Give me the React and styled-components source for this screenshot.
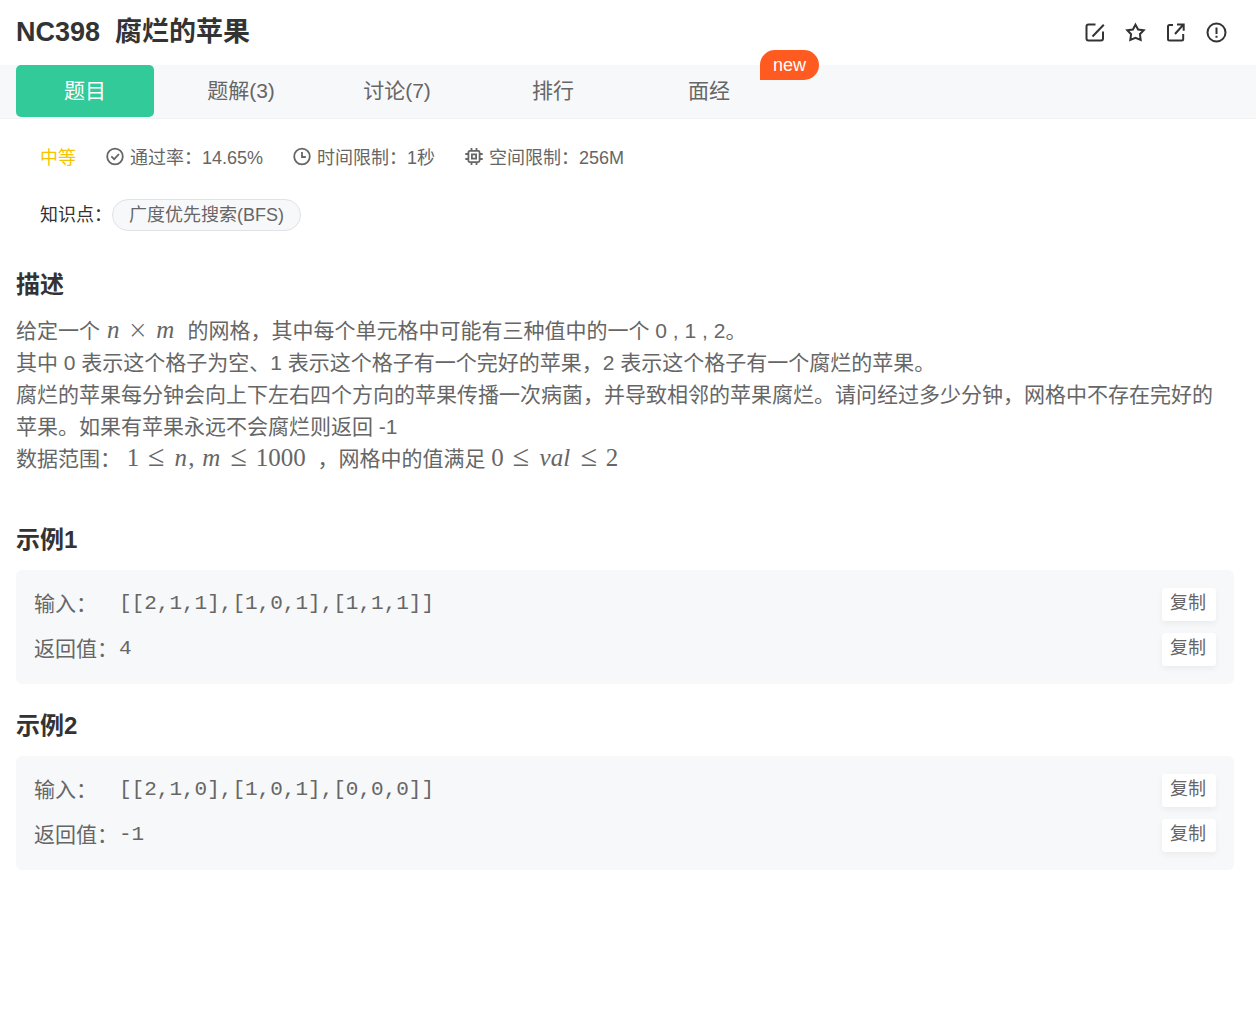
import React from "react";
import styled, { createGlobalStyle } from "styled-components";

const GlobalStyle = createGlobalStyle`
  * {
    box-sizing: border-box;
  }
  body {
    margin: 0;
    background: #fff;
    color: #666;
    font-family: "Liberation Sans", Arial, "Noto Sans CJK SC", sans-serif;
    font-size: 21px;
    line-height: 32px;
  }
  button {
    padding: 0;
    border: 0;
    background: none;
    color: inherit;
    font: inherit;
    cursor: pointer;
  }
`;

const Header = styled.header`
  display: flex;
  align-items: center;
  justify-content: space-between;
  height: 65px;
  padding: 0 28px 2px 16px;
`;

const Title = styled.h1`
  display: flex;
  gap: 15px;
  margin: 0;
  color: #333;
  font-size: 27px;
  line-height: 40px;
`;

const Actions = styled.div`
  display: flex;
  gap: 16px;
  color: #333;
`;

const IconButton = styled.button`
  display: grid;
  place-items: center;
  width: 24px;
  height: 24px;
`;

const Icon = styled.svg`
  display: block;
  flex: none;
  width: ${(p) => p.$size}px;
  height: ${(p) => p.$size}px;
  fill: none;
  stroke: currentColor;
  stroke-width: ${(p) => p.$weight};
`;

const TabBar = styled.nav`
  display: flex;
  gap: 18px;
  padding: 0 16px 1px;
  border-bottom: 1px solid #f1f2f4;
  background: #f7f8fa;
`;

const Tab = styled.button`
  position: relative;
  width: 138px;
  height: 52px;
  border-radius: 5px;
  background: ${(p) => (p.$active ? "#32ca99" : "transparent")};
  color: ${(p) => (p.$active ? "#fff" : "#666")};
`;

const Badge = styled.span`
  position: absolute;
  top: -15px;
  left: 120px;
  padding: 0 13px;
  border-radius: 15px 15px 15px 0;
  background: #ff5a1f;
  color: #fff;
  font-size: 18px;
  line-height: 30px;
`;

const Meta = styled.div`
  display: flex;
  gap: 30px;
  padding: 23px 40px 0;
  font-size: 18px;
`;

const Level = styled.span`
  color: #f5c400;
`;

const MetaItem = styled.span`
  display: flex;
  align-items: center;
  gap: 6px;
`;

const Topics = styled.div`
  display: flex;
  align-items: center;
  padding: 25px 40px 0;
  color: #333;
  font-size: 18px;
`;

const Tag = styled.a`
  padding: 0 16px;
  border: 1px solid #dfe2e6;
  border-radius: 16px;
  background: #f7f8fa;
  color: #666;
  line-height: 30px;
  text-decoration: none;
`;

const Section = styled.section`
  padding: ${(p) => p.$top}px 22px 0 16px;
`;

const Heading = styled.h2`
  margin: 0 0 12px;
  color: #333;
  font-size: 24px;
  line-height: 36px;
`;

const Prose = styled.p`
  margin: 0;
  padding-right: 16px;
`;

const MathText = styled.span`
  font-family: "Liberation Serif", "Times New Roman", serif;
  font-size: 25px;
  line-height: 1;
  white-space: nowrap;
`;

const Variable = styled.i`
  display: inline-block;
  width: ${(p) => p.$width}px;
  text-align: center;
`;

const Operator = styled.span`
  display: inline-block;
  width: 34px;
  line-height: 20px;
  text-align: center;
`;

const Times = styled(Operator)`
  font-family: "DejaVu Sans", sans-serif;
  font-weight: 200;
  font-size: 24px;
`;

const Relation = styled(Operator)`
  font-size: 30px;
`;

const Example = styled.div`
  display: grid;
  gap: 12px;
  padding: 18px;
  border-radius: 6px;
  background: #f7f8fa;
`;

const ExampleRow = styled.div`
  display: grid;
  grid-template-columns: 85px 1fr auto;
  align-items: start;
  line-height: 31px;
`;

const Code = styled.code`
  font-family: "Liberation Mono", "Courier New", monospace;
  font-size: 21px;
`;

const CopyButton = styled.button`
  width: 54px;
  height: 33px;
  padding: 0 2px 2px 0;
  border-radius: 3px;
  background: #fff;
  box-shadow: 0 3px 6px rgba(0, 0, 0, 0.05);
  font-size: 18px;
`;

const EditIcon = () => (
  <Icon viewBox="0 0 24 24" $size={24} $weight={2}>
    <path d="M11.500 4.500H4.500A2 2 0 0 0 2.500 6.500V18.500A2 2 0 0 0 4.500 20.500H17A2 2 0 0 0 19 18.500V11.500" />
    <path d="M8.500 16.500 19.800 4.800" />
  </Icon>
);

const StarIcon = () => (
  <Icon viewBox="0 0 24 24" $size={24} $weight={2}>
    <path d="M11.500 4.700 14.100 9.500 19.700 10.300 15.900 14.200 16.700 19.900 11.500 17.800 6.300 19.900 7.100 14.200 3.300 10.300 8.900 9.500Z" />
  </Icon>
);

const ShareIcon = () => (
  <Icon viewBox="0 0 24 24" $size={24} $weight={2}>
    <path d="M9 5H5.500A1.500 1.500 0 0 0 4 6.500V19A1.500 1.500 0 0 0 5.500 20.500H17.700A1.500 1.500 0 0 0 19.200 19V14" />
    <path d="M11 14 19 5M13 4.500H19.700V10.800" />
  </Icon>
);

const WarningIcon = () => (
  <Icon viewBox="0 0 24 24" $size={24} $weight={2}>
    <circle cx="12.500" cy="12.500" r="9" />
    <path d="M12.500 7.500V14M12.500 15.700V17.700" />
  </Icon>
);

const PassIcon = () => (
  <Icon viewBox="0 0 18 18" $size={18} $weight={1.8}>
    <circle cx="9" cy="7.500" r="7.800" />
    <path d="M5.300 7.300 8.200 10.100 13 5" />
  </Icon>
);

const ClockIcon = () => (
  <Icon viewBox="0 0 18 18" $size={18} $weight={1.8}>
    <circle cx="9" cy="7.500" r="7.800" />
    <path d="M9 3V8H12.800" />
  </Icon>
);

const ChipIcon = () => (
  <Icon viewBox="0 0 18 18" $size={18} $weight={1.8}>
    <rect x="3.400" y="1.900" width="11.200" height="11.200" rx="1.500" />
    <rect x="6.900" y="5.400" width="4.200" height="4.200" />
    <path d="M6.500 1.500V-1M11.500 1.500V-1M6.500 13.500V16M11.500 13.500V16M3 5H0.300M3 10H0.300M15 5H17.700M15 10H17.700" />
  </Icon>
);

const MetaGlyph = styled.span`
  display: flex;

  svg {
    overflow: visible;
  }
`;

const actions = [
  { label: "编辑", Glyph: EditIcon },
  { label: "收藏", Glyph: StarIcon },
  { label: "分享", Glyph: ShareIcon },
  { label: "反馈", Glyph: WarningIcon },
];

const tabs = [
  { label: "题目", active: true },
  { label: "题解(3)" },
  { label: "讨论(7)" },
  { label: "排行" },
  { label: "面经", badge: "new" },
];

const limits = [
  { text: "通过率：14.65%", Glyph: PassIcon },
  { text: "时间限制：1秒", Glyph: ClockIcon },
  { text: "空间限制：256M", Glyph: ChipIcon },
];

const examples = [
  { title: "示例1", input: "[[2,1,1],[1,0,1],[1,1,1]]", output: "4" },
  { title: "示例2", input: "[[2,1,0],[1,0,1],[0,0,0]]", output: "-1" },
];

const copy = (text) => navigator.clipboard?.writeText(text);

export default function App() {
  return (
    <>
      <GlobalStyle />
      <Header>
        <Title>
          <span>NC398</span>
          <span>腐烂的苹果</span>
        </Title>
        <Actions>
          {actions.map(({ label, Glyph }) => (
            <IconButton key={label} type="button" aria-label={label}>
              <Glyph />
            </IconButton>
          ))}
        </Actions>
      </Header>
      <TabBar>
        {tabs.map((tab) => (
          <Tab key={tab.label} type="button" $active={tab.active}>
            {tab.label}
            {tab.badge && <Badge>{tab.badge}</Badge>}
          </Tab>
        ))}
      </TabBar>
      <main>
        <Meta>
          <Level>中等</Level>
          {limits.map(({ text, Glyph }) => (
            <MetaItem key={text}>
              <MetaGlyph>
                <Glyph />
              </MetaGlyph>
              {text}
            </MetaItem>
          ))}
        </Meta>
        <Topics>
          <span>知识点：</span>
          <Tag href="#bfs">广度优先搜索(BFS)</Tag>
        </Topics>
        <Section $top={36}>
          <Heading>描述</Heading>
          <Prose>
            给定一个{" "}
            <MathText>
              <Variable $width={15}>n</Variable>
              <Times>×</Times>
              <Variable $width={21}>m</Variable>
            </MathText>
            {" \u00a0"}的网格，其中每个单元格中可能有三种值中的一个 0 , 1 , 2。
            <br />
            其中 0 表示这个格子为空、1 表示这个格子有一个完好的苹果，2
            表示这个格子有一个腐烂的苹果。
            <br />
            腐烂的苹果每分钟会向上下左右四个方向的苹果传播一次病菌，并导致相邻的苹果腐烂。请问经过多少分钟，网格中不存在完好的苹果。如果有苹果永远不会腐烂则返回
            -1
            <br />
            数据范围：{" "}
            <MathText>
              1<Relation>≤</Relation>
              <Variable $width={15}>n</Variable>,{" "}
              <Variable $width={21}>m</Variable>
              <Relation>≤</Relation>1000
            </MathText>
            {" \u00a0"}，网格中的值满足{" "}
            <MathText>
              0<Relation>≤</Relation>
              <Variable $width={34}>val</Variable>
              <Relation>≤</Relation>2
            </MathText>
          </Prose>
        </Section>
        {examples.map((example, index) => (
          <Section key={example.title} $top={index === 0 ? 47 : 24}>
            <Heading>{example.title}</Heading>
            <Example>
              <ExampleRow>
                <span>输入：</span>
                <Code>{example.input}</Code>
                <CopyButton type="button" onClick={() => copy(example.input)}>
                  复制
                </CopyButton>
              </ExampleRow>
              <ExampleRow>
                <span>返回值：</span>
                <Code>{example.output}</Code>
                <CopyButton type="button" onClick={() => copy(example.output)}>
                  复制
                </CopyButton>
              </ExampleRow>
            </Example>
          </Section>
        ))}
      </main>
    </>
  );
}
